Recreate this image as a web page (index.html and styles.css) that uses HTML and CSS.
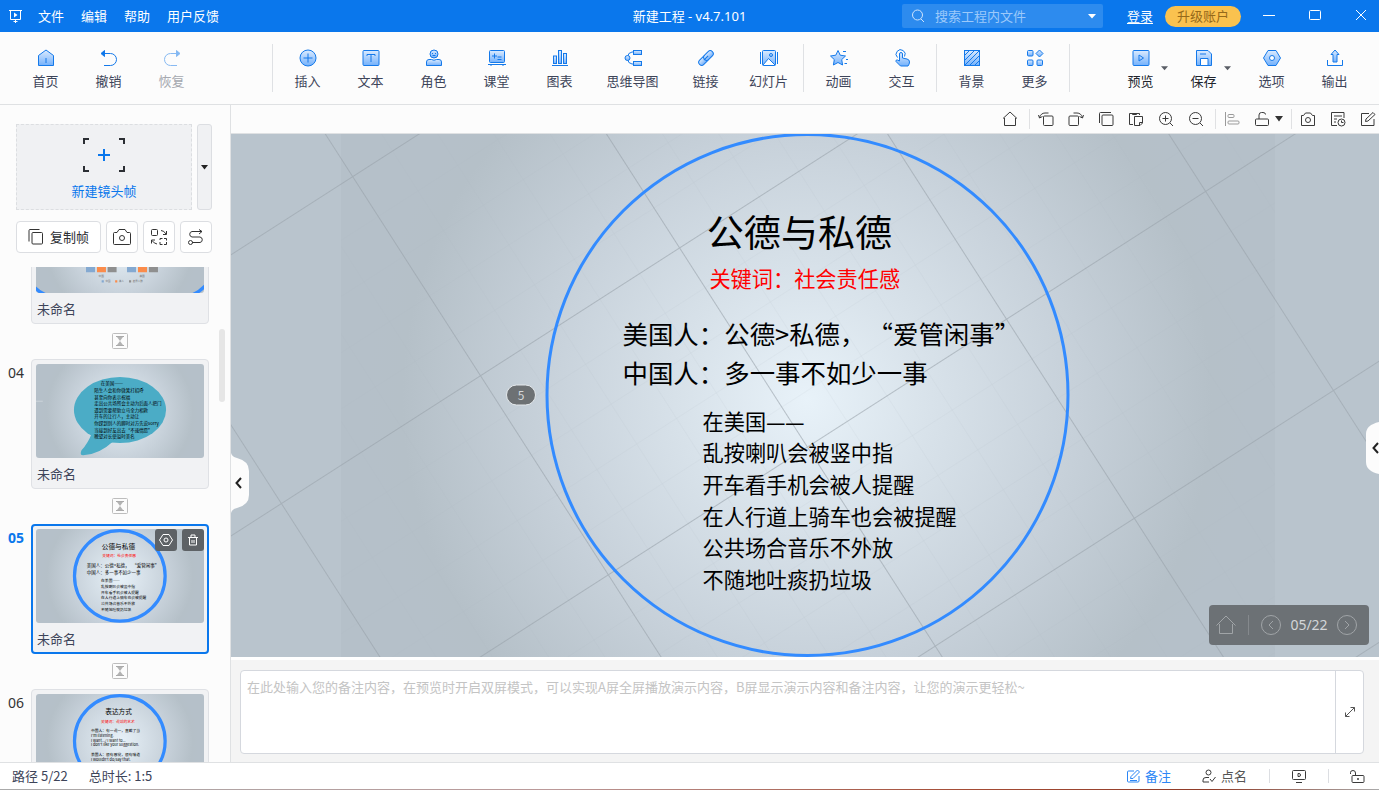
FILE: index.html
```html
<!DOCTYPE html>
<html lang="zh-CN">
<head>
<meta charset="utf-8">
<meta name="viewport" content="width=device-width, initial-scale=1">
<title>新建工程 - v4.7.101</title>
<link rel="stylesheet" href="styles.css">
</head>
<body>
<svg class="defs" width="0" height="0" aria-hidden="true">
  <defs>
    <linearGradient id="ig" x1="0" y1="0" x2="0" y2="1"><stop offset="0" stop-color="#dcebfe"/><stop offset="1" stop-color="#74b1fb"/></linearGradient>
    <radialGradient id="glow" gradientUnits="userSpaceOnUse" cx="807" cy="400" r="440">
      <stop offset="0" stop-color="#e8f2f9"/><stop offset=".3" stop-color="#d7e1e9"/><stop offset=".6" stop-color="#c7d1da"/><stop offset=".92" stop-color="#b5c0c8"/><stop offset="1" stop-color="#b5c0c9"/>
    </radialGradient>
    <pattern id="minor" width="47.3" height="47.3" patternUnits="userSpaceOnUse" patternTransform="translate(352 177) rotate(-32.7)"><path d="M0 0H47.3M0 0V47.3" stroke="#a3b0ba" stroke-opacity=".2" fill="none"/></pattern>
    <pattern id="major" width="236.6" height="236.6" patternUnits="userSpaceOnUse" patternTransform="translate(352 177) rotate(-32.7)"><path d="M0 0H236.6M0 0V236.6" stroke="#97a0a8" stroke-opacity=".75" stroke-width="2" fill="none"/></pattern>
  </defs>
</svg>
<div class="app">
  <header class="titlebar">
    <svg class="logo" width="15" height="15" viewBox="0 0 15 15"><path d="M1 1.500H14M2.500 1.500V10.500H12.500V1.500M7.500 10.500V14M5.500 12.500H9.500" fill="none" stroke="#fff"/><path d="M6 3.500L9.500 6L6 8.500Z" fill="#fff"/></svg>
    <nav class="menu"><button>文件</button><button>编辑</button><button>帮助</button><button>用户反馈</button></nav>
    <h1 class="doc-title">新建工程 - v4.7.101</h1>
    <div class="search">
      <svg width="14" height="14" viewBox="0 0 14 14" fill="none" stroke="#cfe4fd"><circle cx="6.500" cy="6" r="5"/><path d="M10 10L13 13"/></svg>
      <input type="text" placeholder="搜索工程内文件" aria-label="搜索工程内文件">
      <button aria-label="搜索范围"><svg width="10" height="6" viewBox="0 0 10 6"><path d="M1 1H9L5 5.500Z" fill="#fff"/></svg></button>
    </div>
    <a class="login" href="#">登录</a>
    <button class="upgrade">升级账户</button>
    <div class="winbtns">
      <button aria-label="最小化"><svg width="12" height="12" viewBox="0 0 12 12"><path d="M0 5.500H12" stroke="#fff"/></svg></button>
      <button aria-label="最大化"><svg width="12" height="12" viewBox="0 0 12 12"><rect x=".5" y=".5" width="11" height="9" rx="1" fill="none" stroke="#fff"/></svg></button>
      <button aria-label="关闭"><svg width="12" height="12" viewBox="0 0 12 12"><path d="M1 0L11 10M11 0L1 10" stroke="#fff"/></svg></button>
    </div>
  </header>

  <div class="ribbon">
    <div class="group">
      <button class="tool"><svg class="ic" viewBox="0 0 18 18"><path d="M1.500 6.500L9 1L16.500 6.500V16.500H1.500Z"/><path d="M9 9V14"/></svg><span>首页</span></button>
      <button class="tool"><svg class="ic line" viewBox="0 0 18 18"><path d="M3 4.500H10.500A6 6 0 0 1 10.500 16.500H4"/><path class="solid" d="M4.500 1.500L1 4.500L4.500 7.500Z"/></svg><span>撤销</span></button>
      <button class="tool" disabled><svg class="ic line" viewBox="0 0 18 18"><path d="M15 4.500H7.500A6 6 0 0 0 7.500 16.500H14"/><path class="solid" d="M13.500 1.500L17 4.500L13.500 7.500Z"/></svg><span>恢复</span></button>
    </div>
    <div class="group insert">
      <i class="sep"></i>
      <button class="tool"><svg class="ic" viewBox="0 0 18 18"><circle cx="9" cy="9" r="8"/><path d="M9 4.500V13.500M4.500 9H13.500"/></svg><span>插入</span></button>
      <button class="tool"><svg class="ic" viewBox="0 0 18 18"><rect x="1" y="1.500" width="16" height="15" rx="1"/><path d="M5 7V5.500H13V7M9 5.500V13"/></svg><span>文本</span></button>
      <button class="tool"><svg class="ic" viewBox="0 0 18 18"><circle cx="9" cy="5" r="4"/><path d="M1.500 16.500V13Q1.500 10.500 4 10.500H6.500Q9 12 11.500 10.500H14Q16.500 10.500 16.500 13V16.500Z"/><path d="M7.500 4V5M10.500 4V5M7.500 6.500H10.500"/></svg><span>角色</span></button>
      <button class="tool"><svg class="ic" viewBox="0 0 18 18"><rect x="1.500" y="1.500" width="15" height="12" rx="1"/><path d="M0 15.500H18M3 15.500V17M15 15.500V17M4 7H9M6.500 4.500V9.500M9.500 8H13.500M9.500 10.500H13.500"/></svg><span>课堂</span></button>
      <button class="tool"><svg class="ic" viewBox="0 0 18 18"><path d="M1 16.500H17"/><rect x="2.500" y="7" width="3" height="7.500"/><rect x="7.500" y="1.500" width="3" height="13"/><rect x="12.500" y="4.500" width="3" height="10"/></svg><span>图表</span></button>
      <button class="tool wide"><svg class="ic" viewBox="0 0 18 18"><path fill="none" d="M9 3H8Q4 3.500 3.500 8M9 15H8Q4 14.500 3.500 10"/><circle cx="3.500" cy="9" r="2.500"/><rect x="9.500" y="1.500" width="8" height="4"/><rect x="9.500" y="12.500" width="8" height="4"/></svg><span>思维导图</span></button>
      <button class="tool"><svg class="ic" viewBox="0 0 18 18"><g transform="rotate(-45 9 9)"><rect x="0" y="6" width="11" height="6" rx="3"/><rect x="7" y="6" width="11" height="6" rx="3"/><path d="M6 9H12"/></g></svg><span>链接</span></button>
      <button class="tool"><svg class="ic" viewBox="0 0 18 18"><path d="M.5 3V15M17.500 3V15"/><rect x="2.500" y="1.500" width="13" height="15" rx="1"/><path d="M3 16L8.500 9.500L15 16" fill="#fff"/><circle cx="11" cy="6" r="1.500"/></svg><span>幻灯片</span></button>
      <i class="sep"></i>
      <button class="tool"><svg class="ic" viewBox="0 0 18 18"><path d="M8 1.500L10.200 6.200L15.500 7L11.700 10.600L12.600 16L8 13.500L3.400 16L4.300 10.600L.5 7L5.800 6.200Z"/><path d="M13 2.500H16M16 10.500H18M14.500 14.500H17"/></svg><span>动画</span></button>
      <button class="tool"><svg class="ic" viewBox="0 0 18 18"><path fill="none" d="M4.500 8.500A4.500 4.500 0 1 1 11.500 7.500"/><path d="M6.500 12V5A1.500 1.500 0 0 1 9.500 5V9L14 10Q16.500 10.500 16.500 13Q16.500 15 15 17H7.500L3 12.500Q2.500 10.500 4.500 11Z"/></svg><span>交互</span></button>
      <i class="sep"></i>
      <button class="tool"><svg class="ic" viewBox="0 0 18 18"><rect x="1.500" y="1.500" width="15" height="15"/><path d="M2 6L6 2M2 11L11 2M2 16L16 2M7 16L16 7M12 16L16 12"/></svg><span>背景</span></button>
      <button class="tool"><svg class="ic" viewBox="0 0 18 18"><rect x="1.500" y="1.500" width="5.500" height="5.500" rx="1"/><path d="M13.500 1L17 4.500L13.500 8L10 4.500Z"/><rect x="1.500" y="11" width="5.500" height="5.500" rx="1"/><rect x="11" y="11" width="5.500" height="5.500" rx="1"/></svg><span>更多</span></button>
      <i class="sep"></i>
    </div>
    <div class="group right">
      <button class="tool dark"><svg class="ic" viewBox="0 0 18 18"><rect x="1" y="1.500" width="16" height="15" rx="1"/><path d="M7 6L11.500 9L7 12Z"/></svg><span>预览</span><svg class="caret" viewBox="0 0 8 5"><path d="M0 0H8L4 4.500Z"/></svg></button>
      <button class="tool dark"><svg class="ic" viewBox="0 0 18 18"><path d="M1.500 1.500H13L16.500 5V16.500H1.500Z"/><path d="M5.500 16.500V9.500H13V16.500Z" fill="#fff"/><path d="M5 5H11"/></svg><span>保存</span><svg class="caret" viewBox="0 0 8 5"><path d="M0 0H8L4 4.500Z"/></svg></button>
      <button class="tool opt"><svg class="ic" viewBox="0 0 18 18"><path d="M5 1.500H13L17.500 9L13 16.500H5L.5 9Z"/><circle cx="9" cy="9" r="2.500" fill="#fff"/></svg><span>选项</span></button>
      <button class="tool"><svg class="ic" viewBox="0 0 18 18"><path d="M1.500 11V16.500H16.500V11" fill="none"/><path d="M9 1L13 5.500H11V13H7V5.500H5Z"/></svg><span>输出</span></button>
    </div>
  </div>

  <div class="workspace">
    <aside class="sidebar">
      <div class="newrow">
        <button class="newframe">
          <svg width="42" height="34" viewBox="0 0 42 34" fill="none" stroke-width="2"><path stroke="#2b2e33" d="M1 6V1H6M36 1H41V6M1 28V33H6M36 33H41V28" /><path stroke="#0a77ec" d="M21 11V23M15 17H27"/></svg>
          <span>新建镜头帧</span>
        </button>
        <button class="newmore" aria-label="镜头帧类型"><svg width="7" height="5" viewBox="0 0 7 5"><path d="M0 0H7L3.500 4.500Z" fill="#222"/></svg></button>
      </div>
      <div class="frametools">
        <button class="copy"><svg width="16" height="16" viewBox="0 0 16 16"><rect x="4" y="3.500" width="10.500" height="11.500" rx="1"/><path d="M1 12.500V1.500Q1 .5 2 .5H11.500"/></svg><span>复制帧</span></button>
        <button aria-label="截图"><svg width="18" height="16" viewBox="0 0 18 16"><path d="M1.500 3.500H4L6 .5H12L14 3.500H16.500Q17.500 3.500 17.500 4.500V14.500Q17.500 15.500 16.500 15.500H1.500Q.5 15.500 .5 14.500V4.500Q.5 3.500 1.500 3.500Z"/><circle cx="9" cy="9" r="2.500"/></svg></button>
        <button aria-label="替换"><svg width="18" height="16" viewBox="0 0 18 16"><rect x="1.500" y=".5" width="6" height="6" rx="1"/><path d="M10 9.500V11M10 13V15.500H12.500M14 15.500H16.500V13M16.500 11.500V9.500H14M12.500 9.500H10M11 1.500Q14 1.500 16 5M16.500 2V5.500H13M7 15Q4 14.500 2 11.500M1.500 14.500V11H5"/></svg></button>
        <button aria-label="路径"><svg width="18" height="16" viewBox="0 0 18 16"><path d="M15 2.500H5A2.800 2.800 0 0 0 5 8H13A2.800 2.800 0 0 1 13 13.500H5M12 .5L15 2.500L12 5"/><circle cx="3.500" cy="13.500" r="2"/></svg></button>
      </div>
      <div class="framelist">
        <div class="frames">
          <div class="frame"><b></b><div class="card">
            <svg class="thumb" viewBox="341 134 934 523" preserveAspectRatio="none"><rect x="341" y="134" width="934" height="523" fill="url(#glow)"/>
              <svg x="341" y="134" width="934" height="523" viewBox="0 0 934 523"><path d="M-10 490Q20 522 60 535M944 480Q904 522 864 535" stroke="#338bff" stroke-width="18" fill="none"/><path d="M278 330h50v78h-50zM506 330h50v78h-50z" fill="#84a9d1"/><path d="M339 330h50v78h-50zM567 330h50v78h-50z" fill="#fb8c4b"/><path d="M398 330h50v78h-50zM628 330h50v78h-50z" fill="#8f8f8f"/><g fill="#777"><text x="348" y="433" font-size="15">中国</text><text x="575" y="433" font-size="15">美国</text><text x="386" y="464" font-size="14">中国</text><text x="462" y="464" font-size="14">美人</text><text x="538" y="464" font-size="14">差异人群</text></g>
              <path d="M365 452h12v12h-12z" fill="#84a9d1"/><path d="M440 452h12v12h-12z" fill="#fb8c4b"/><path d="M517 452h12v12h-12z" fill="#8f8f8f"/></svg></svg>
            <span>未命名</span></div></div>
          <i class="trans"><svg width="16" height="16" viewBox="0 0 16 16"><rect x=".5" y=".5" width="15" height="15" rx="1" fill="none" stroke="#bdbdbd"/><path d="M4 3.500H12M4 12.500H12" stroke="#aaa"/><path d="M5 4H11L8 8ZM8 8L11 12H5Z" fill="#b3b3b3"/></svg></i>
          <div class="frame"><b>04</b><div class="card">
            <svg class="thumb" viewBox="341 134 934 523" preserveAspectRatio="none"><rect x="341" y="134" width="934" height="523" fill="url(#glow)"/>
              <svg x="341" y="134" width="934" height="523" viewBox="0 0 934 523"><path d="M0 207H38" stroke="#d5dce2" stroke-width="4"/><path d="M310 385Q290 440 253 480Q240 507 262 508Q350 505 430 430Z" fill="#4bacc6"/><ellipse cx="467" cy="256" rx="256" ry="183" fill="#4bacc6"/>
              <g font-size="25"><text x="360" y="118">在美国——</text><text x="324" y="155">陌生人会和你微笑打招呼</text><text x="324" y="192">甚至向你表示祝福</text><text x="324" y="229">走出公共场所会主动为后面人把门</text><text x="324" y="266">遇到需要帮助立马全力相救</text><text x="324" y="303">开车的让行人，主动让</text><text x="324" y="340">你踩到别人的脚时对方先说sorry</text><text x="324" y="377">当接到好友出去“不速情愿”</text><text x="324" y="414">晚望对长使溢时美名</text></g></svg></svg>
            <span>未命名</span></div></div>
          <i class="trans"><svg width="16" height="16" viewBox="0 0 16 16"><rect x=".5" y=".5" width="15" height="15" rx="1" fill="none" stroke="#bdbdbd"/><path d="M4 3.500H12M4 12.500H12" stroke="#aaa"/><path d="M5 4H11L8 8ZM8 8L11 12H5Z" fill="#b3b3b3"/></svg></i>
          <div class="frame active"><b>05</b><div class="card">
            <svg class="thumb" viewBox="341 134 934 523" preserveAspectRatio="none"><rect x="341" y="134" width="934" height="523" fill="url(#glow)"/><circle cx="807" cy="395" r="252" fill="none" stroke="#338bff" stroke-width="18"/>
              <svg x="341" y="134" width="934" height="523" viewBox="0 0 934 523"><text x="366" y="113" font-size="37">公德与私德</text><text x="368" y="154" font-size="21" fill="#f00">关键词：社会责任感</text><g font-size="25"><text x="282" y="210">美国人：公德&gt;私德，<tspan dx="15">“爱管闲事”</tspan></text><text x="282" y="248">中国人：多一事不如少一事</text></g><g font-size="21"><text x="362" y="296">在美国——</text><text x="362" y="328">乱按喇叭会被竖中指</text><text x="362" y="359">开车看手机会被人提醒</text><text x="362" y="391">在人行道上骑车也会被提醒</text><text x="362" y="422">公共场合音乐不外放</text><text x="362" y="454">不随地吐痰扔垃圾</text></g></svg></svg>
            <div class="actions"><button aria-label="设置"><svg width="14" height="12" viewBox="0 0 14 12" fill="none" stroke="#fff"><path d="M4 .5H10L13.500 6L10 11.500H4L.5 6Z"/><circle cx="7" cy="6" r="2"/></svg></button><button aria-label="删除"><svg width="12" height="12" viewBox="0 0 12 12" fill="none" stroke="#fff"><path d="M1 3.500H11M4 3V1H8V3M2.500 3.500V11H9.500V3.500M5 6V9M7 6V9"/></svg></button></div>
            <span>未命名</span></div></div>
          <i class="trans"><svg width="16" height="16" viewBox="0 0 16 16"><rect x=".5" y=".5" width="15" height="15" rx="1" fill="none" stroke="#bdbdbd"/><path d="M4 3.500H12M4 12.500H12" stroke="#aaa"/><path d="M5 4H11L8 8ZM8 8L11 12H5Z" fill="#b3b3b3"/></svg></i>
          <div class="frame"><b>06</b><div class="card">
            <svg class="thumb" viewBox="341 134 934 523" preserveAspectRatio="none"><rect x="341" y="134" width="934" height="523" fill="url(#glow)"/><circle cx="807" cy="395" r="252" fill="none" stroke="#338bff" stroke-width="18"/>
              <svg x="341" y="134" width="934" height="523" viewBox="0 0 934 523"><text x="385" y="114" font-size="37">表达方式</text><text x="361" y="163" font-size="21" fill="#f00">关键词：说话的艺术</text><g font-size="21"><text x="306" y="213">中国人：有一说一，直截了当</text><text x="306" y="241">I'm listening.</text><text x="306" y="268">I want.../ I want to...</text><text x="306" y="292">I don't like your suggestion.</text><text x="306" y="347">美国人：很有感觉，很有味道</text><text x="306" y="374">I wouldn't do/say that.</text></g></svg></svg>
            </div></div>
        </div>
        <div class="scrollthumb"></div>
      </div>
    </aside>

    <main class="main">
      <div class="viewbar">
        <button aria-label="主页"><svg viewBox="0 0 16 16"><path d="M1 7.500L8 1L15 7.500M2.500 7V14.500H13.500V7"/></svg></button>
        <i class="sep"></i>
        <button aria-label="左旋转"><svg viewBox="0 0 16 16"><rect x="5.500" y="5" width="9.500" height="9.500" rx="1"/><path d="M10.500 2H7Q3 2 1.500 6.500M.5 4L1.500 7L4.500 5.500"/></svg></button>
        <button aria-label="右旋转"><svg viewBox="0 0 16 16"><rect x="1" y="5" width="9.500" height="9.500" rx="1"/><path d="M5.500 2H9Q13 2 14.500 6.500M15.500 4L14.500 7L11.500 5.500"/></svg></button>
        <button aria-label="复制"><svg viewBox="0 0 16 16"><rect x="4" y="4" width="11" height="10.500" rx="1"/><path d="M1.500 12V2.500Q1.500 1.500 2.500 1.500H13"/></svg></button>
        <button aria-label="粘贴"><svg viewBox="0 0 16 16"><path d="M5 13.500H1.500V2.500H11.500V4M4.500 2V3.500H8.500V2M6.500 5.500H14.500V12L12 14.500H6.500ZM14.500 11.500H11.500V14.500"/></svg></button>
        <button aria-label="放大"><svg viewBox="0 0 16 16"><circle cx="7.500" cy="7.500" r="6"/><path d="M12 12L15 15M4.500 7.500H10.500M7.500 4.500V10.500"/></svg></button>
        <button aria-label="缩小"><svg viewBox="0 0 16 16"><circle cx="7.500" cy="7.500" r="6"/><path d="M12 12L15 15M4.500 7.500H10.500"/></svg></button>
        <i class="sep"></i>
        <button aria-label="对齐" disabled><svg viewBox="0 0 16 16"><path d="M1.500 1V15"/><rect x="4" y="3.500" width="6" height="3" rx="1"/><rect x="4" y="10" width="11" height="3" rx="1"/></svg></button>
        <button aria-label="解锁" class="lock"><svg viewBox="0 0 16 16"><rect x="1.500" y="8" width="13" height="6.500" rx="1"/><path d="M5 8V4Q5 1.500 7.500 1.500H9Q11.500 1.500 11.500 3.500"/></svg></button>
        <button aria-label="锁定选项" class="drop"><svg viewBox="0 0 8 6"><path d="M0 0H8L4 5.500Z" fill="#333" stroke="none"/></svg></button>
        <i class="sep"></i>
        <button aria-label="截图"><svg viewBox="0 0 16 16"><path d="M1.500 4.500H3.500L5.500 2H10.500L12.500 4.500H14.500V14.500H1.500Z"/><circle cx="8" cy="9" r="2.500"/></svg></button>
        <button aria-label="历史"><svg viewBox="0 0 16 16"><path d="M7 14.500H1.500V1.500H14V7M4 5H12M4 8H7M4 11H6"/><circle cx="11.500" cy="11.500" r="3.500"/><path d="M11.500 9.500V11.500H13.500"/></svg></button>
        <button aria-label="编辑" class="last"><svg viewBox="0 0 16 16"><path d="M9 2.500H1.500V14.500H14V8M5.500 10.500L6 8L13 1.500L15 3.500L8 10Z"/></svg></button>
      </div>

      <div class="stage">
        <svg class="board" viewBox="231 134 1148 524" preserveAspectRatio="xMidYMid slice">
          <rect x="-800" y="-400" width="3200" height="1600" fill="#b9c4cd"/>
          <rect x="341" y="134" width="934" height="524" fill="url(#glow)"/>
          <rect x="341" y="134" width="934" height="524" fill="url(#minor)"/>
          <rect x="-800" y="-400" width="3200" height="1600" fill="url(#major)" opacity=".75"/>
          <circle cx="807.500" cy="395.500" r="260.500" fill="none" stroke="#338bff" stroke-width="3"/>
          <rect x="506.500" y="385.500" width="29" height="20" rx="10" fill="#6d7174" stroke="#e4e8eb"/>
          <text class="badge" x="521" y="400" text-anchor="middle" font-size="12">5</text>
          <svg x="231" y="134" width="1148" height="524" viewBox="0 0 2166 989" preserveAspectRatio="xMinYMin meet">
            <text x="898" y="214" font-size="70">公德与私德</text>
            <text x="903" y="290" font-size="40" fill="#f00">关键词：社会责任感</text>
            <g font-size="48"><text x="739" y="398">美国人：公德&gt;私德，<tspan dx="28">“爱管闲事”</tspan></text><text x="739" y="470">中国人：多一事不如少一事</text></g>
            <g font-size="40"><text x="890" y="559">在美国<tspan class="dash" font-size="36">——</tspan></text><text x="890" y="619">乱按喇叭会被竖中指</text><text x="890" y="678">开车看手机会被人提醒</text><text x="890" y="738">在人行道上骑车也会被提醒</text><text x="890" y="797">公共场合音乐不外放</text><text x="890" y="857">不随地吐痰扔垃圾</text></g>
          </svg>
        </svg>
        <button class="handle left" aria-label="收起左侧栏"><svg width="18" height="60" viewBox="0 0 18 60"><path d="M0 0Q1 4 6 5Q18 8 18 18V42Q18 52 6 55Q1 56 0 60Z" fill="#fcfcfc"/><path d="M10 25L5.500 30L10 35" fill="none" stroke="#222" stroke-width="2"/></svg></button>
        <button class="handle right" aria-label="展开右侧栏"><svg width="13" height="52" viewBox="0 0 13 52"><path d="M13 0Q0 3 0 12V40Q0 49 13 52Z" fill="#fcfcfc"/><path d="M12 21L7.500 26L12 31" fill="none" stroke="#222" stroke-width="2"/></svg></button>
        <div class="pager">
          <button aria-label="首帧"><svg width="20" height="20" viewBox="0 0 20 20"><path d="M.5 10.500L10 1L19.500 10.500M3.500 9V18.500H16.500V9"/></svg></button>
          <i></i>
          <button aria-label="上一帧"><svg width="20" height="20" viewBox="0 0 20 20"><circle cx="10" cy="10" r="9.500"/><path d="M12 6L8 10L12 14"/></svg></button>
          <span>05/22</span>
          <button aria-label="下一帧"><svg width="20" height="20" viewBox="0 0 20 20"><circle cx="10" cy="10" r="9.500"/><path d="M8 6L12 10L8 14"/></svg></button>
        </div>
      </div>

      <div class="notes">
        <div class="notebox">
          <textarea aria-label="备注" placeholder="在此处输入您的备注内容，在预览时开启双屏模式，可以实现A屏全屏播放演示内容，B屏显示演示内容和备注内容，让您的演示更轻松~"></textarea>
          <button aria-label="展开备注"><svg width="12" height="12" viewBox="0 0 12 12" fill="none" stroke="#555"><path d="M1.500 10.500L10.500 1.500M6.500 1.500H10.500V5.500M1.500 6.500V10.500H5.500"/></svg></button>
        </div>
      </div>
    </main>
  </div>

  <footer class="status">
    <span>路径 5/22</span><span>总时长: 1:5</span>
    <div class="statusright">
      <button class="note on"><svg width="13" height="14" viewBox="0 0 13 14"><path d="M7 2H1.500Q.5 2 .5 3V12Q.5 13 1.500 13H11Q12 13 12 12V7M3.500 9.500L4 7.500L10.500 1L12.500 3L6 9.500ZM3 11.500H10"/></svg>备注</button>
      <button class="note roll"><svg width="14" height="14" viewBox="0 0 14 14"><circle cx="6.500" cy="3.500" r="2.500"/><path d="M7 13H1V11Q1 8.500 4 8.500H7M8 10L10 12.500L13.500 8"/></svg>点名</button>
      <i class="sep"></i>
      <button aria-label="双屏"><svg width="14" height="14" viewBox="0 0 14 14"><rect x=".5" y="1.500" width="13" height="9" rx="1"/><path d="M4 13.500H10M6 4.500V7.500H7Q8.500 7.500 8.500 6T7 4.500Z"/></svg></button>
      <i class="sep"></i>
      <button aria-label="锁定"><svg width="16" height="14" viewBox="0 0 16 14"><rect x="3" y="6.500" width="12" height="7" rx="1"/><path d="M6.500 6V4Q6.500 1.500 4 1.500Q1.500 1.500 1.500 3.500V5M8.500 9.500H9.500V10.500H8.500Z"/></svg></button>
    </div>
  </footer>
  <div class="underlay"></div>
</div>
</body>
</html>
```

FILE: styles.css
```css
* { box-sizing: border-box; }

body {
  margin: 0;
  font: 13px/18px "Noto Sans", "Noto Sans CJK SC", sans-serif;
  color: #3d4459;
  background: #fcfcfc;
}

button {
  margin: 0;
  padding: 0;
  border: 0;
  background: none;
  font: inherit;
  color: inherit;
}

svg { display: block; flex: none; }
.defs { position: absolute; }

.app {
  display: grid;
  grid-template-rows: auto auto minmax(0, 1fr) auto auto;
  height: 100vh;
  overflow: hidden;
}

/* Title bar */
.titlebar {
  position: relative;
  display: flex;
  align-items: center;
  height: 32px;
  padding-left: 8px;
  background: #0a77ec;
  color: #fff;
}
.menu { display: flex; gap: 17px; margin-left: 15px; }
.doc-title {
  position: absolute;
  left: 50%;
  transform: translateX(-50%);
  margin: 0;
  font-size: 13px;
  font-weight: 400;
}
.search {
  display: flex;
  align-items: center;
  width: 201px;
  height: 24px;
  margin-left: auto;
  padding: 0 6px 0 9px;
  border-radius: 2px;
  background: #2d8bee;
}
.search input {
  flex: 1;
  min-width: 0;
  margin-left: 10px;
  padding: 0;
  border: 0;
  outline: 0;
  background: none;
  font: inherit;
  color: #fff;
}
.search input::placeholder { color: #9cc9fa; opacity: 1; }
.login { margin-left: 24px; color: #fff; text-underline-offset: 2px; }
.upgrade {
  width: 76px;
  height: 21px;
  margin-left: 12px;
  border-radius: 11px;
  background: #fac24f;
  color: #95691a;
  line-height: 20px;
}
.winbtns { display: flex; gap: 34px; margin: 0 12px 0 22px; }

/* Ribbon */
.ribbon {
  display: flex;
  height: 73px;
  padding: 0 13px 0 14px;
  border-bottom: 1px solid #dfe1e3;
}
.group { display: flex; }
.insert { margin-left: 66px; }
.right { margin-left: auto; }
.group .sep {
  width: 1px;
  height: 48px;
  margin: 12px 3px 0;
  background: #dfe1e4;
}
.tool {
  position: relative;
  display: flex;
  flex-direction: column;
  align-items: center;
  width: 63px;
  padding-top: 17px;
}
.tool span { margin-top: 5px; }
.wide { width: 83px; }
.dark { color: #20242c; }
.opt { margin-left: 5px; }
.tool:disabled { color: #a5a8af; }
.tool:disabled .ic { opacity: .5; }
.ic { width: 18px; height: 18px; fill: url(#ig); stroke: #1479ea; }
.line { fill: none; }
.solid { fill: #0a77ec; }
.caret {
  position: absolute;
  left: 52px;
  top: 34px;
  width: 7px;
  height: 5px;
  fill: #5a5e66;
}

/* Workspace */
.workspace { display: grid; grid-template-columns: 231px minmax(0, 1fr); min-height: 0; }

.sidebar {
  display: flex;
  flex-direction: column;
  min-height: 0;
  padding-top: 19px;
  border-right: 1px solid #dfe1e3;
}
.newrow { display: flex; gap: 5px; padding: 0 18px 0 16px; }
.newframe {
  display: flex;
  flex: 1;
  flex-direction: column;
  align-items: center;
  height: 86px;
  padding-top: 13px;
  border: 1px dashed #dcdee1;
  background: #f0f1f3;
  color: #0a77ec;
}
.newframe span { margin-top: 10px; }
.newmore {
  display: grid;
  place-items: center;
  width: 15px;
  border: 1px solid #dcdee2;
  border-radius: 3px;
  background: #f0f1f3;
}
.frametools { display: flex; gap: 5px; padding: 11px 18px 0 16px; }
.frametools button {
  display: flex;
  align-items: center;
  justify-content: center;
  width: 32px;
  height: 32px;
  border: 1px solid #dcdee2;
  border-radius: 4px;
  background: #fff;
  color: #2b2e33;
}
.frametools .copy { flex: 1; gap: 6px; }
.frametools svg { fill: none; stroke: #333; }

.framelist { position: relative; flex: 1; min-height: 0; margin-top: 14px; overflow: hidden; }
.frames { display: flex; flex-direction: column; margin-top: -73px; padding-left: 8px; }
.frame { display: flex; }
.frame b {
  width: 23px;
  padding-top: 5px;
  font-size: 14px;
  font-weight: 400;
  color: #333;
}
.card {
  position: relative;
  width: 178px;
  height: 130px;
  padding: 4px;
  border: 1px solid #dfe1e5;
  border-radius: 4px;
  background: #f1f2f4;
}
.card > span { display: block; margin: 7px 1px; }
.thumb { width: 168px; height: 94px; border-radius: 3px; }
.active b { font-weight: 700; color: #0a77ec; }
.active .card { padding: 3px; border: 2px solid #0a77ec; }
.actions { position: absolute; top: 3px; right: 3px; display: flex; gap: 5px; }
.actions button {
  display: grid;
  place-items: center;
  width: 22px;
  height: 22px;
  border-radius: 3px;
  background: #5e6266;
}
.trans { display: flex; justify-content: center; width: 178px; height: 35px; margin-left: 23px; padding-top: 9px; }
.scrollthumb {
  position: absolute;
  top: 62px;
  right: 5px;
  width: 6px;
  height: 73px;
  border-radius: 3px;
  background: #e6e6e6;
}

.main { display: flex; flex-direction: column; min-width: 0; min-height: 0; }
.viewbar {
  display: flex;
  align-items: center;
  justify-content: flex-end;
  height: 29px;
  border-bottom: 1px solid #dfe1e3;
}
.viewbar button { display: grid; place-items: center; width: 22px; margin: 0 8px 0 0; }
.viewbar svg { width: 16px; height: 16px; fill: none; stroke: #3a3a3a; }
.viewbar button:disabled { opacity: .5; }
.viewbar .sep { width: 1px; height: 20px; margin: 0 5px 0 0; background: #e0e1e3; }
.viewbar .lock { margin-right: 1px; }
.viewbar .drop { width: 10px; margin-right: 7px; }
.viewbar .drop svg { width: 8px; height: 6px; }
.viewbar .last { margin-right: 0; }

.stage { position: relative; flex: 1; min-height: 0; overflow: hidden; background: #b9c4cd; }
.board { width: 100%; height: 100%; }
.board text, .thumb text { font-family: "Noto Sans CJK SC", sans-serif; }
.board .dash { font-family: "Noto Sans", sans-serif; }
.board .badge { fill: #d5d8da; }
.handle { position: absolute; }
.handle.left { left: 0; top: 319px; }
.handle.right { right: 0; top: 288px; }
.pager {
  position: absolute;
  right: 10px;
  bottom: 12px;
  display: flex;
  align-items: center;
  width: 160px;
  height: 40px;
  padding: 0 12px 0 7px;
  border-radius: 4px;
  background: #6c7175;
  color: #d4d6d8;
  font-size: 14px;
}
.pager svg { fill: none; stroke: #a0a4a7; }
.pager i { width: 1px; height: 20px; margin: 0 12px; background: #85898d; }
.pager span { flex: 1; text-align: center; }

.notes {
  height: 105px;
  padding: 9px 15px 8px 9px;
  border-top: 3px solid #fff;
  background: #f4f4f4;
}
.notebox {
  display: flex;
  height: 84px;
  margin-top: 1px;
  border: 1px solid #d5d8de;
  border-radius: 4px;
  background: #fff;
}
.notebox textarea {
  flex: 1;
  min-width: 0;
  padding: 7px 6px;
  border: 0;
  outline: 0;
  resize: none;
  background: none;
  font: 13px/18px "Noto Sans CJK SC", sans-serif;
}
.notebox textarea::placeholder { color: #c4c4c4; opacity: 1; }
.notebox button { display: grid; place-items: center; width: 28px; border-left: 1px solid #d5d8de; }

/* Status bar */
.status {
  display: flex;
  align-items: center;
  gap: 21px;
  height: 27px;
  padding: 0 14px 0 12px;
  border-top: 1px solid #dfe1e3;
  background: #fff;
  font-family: "Noto Sans CJK SC", sans-serif;
}
.statusright { display: flex; align-items: center; margin-left: auto; }
.statusright svg { fill: none; stroke: #3a3a3a; }
.note { display: flex; align-items: center; gap: 5px; color: #555; }
.on { color: #2b86f5; }
.on svg { stroke: #2b86f5; }
.roll { margin-left: 31px; }
.statusright .sep { width: 1px; height: 14px; margin: 0 22px; background: #dcdee2; }
.statusright .sep:last-of-type { margin-right: 20px; }
.underlay { height: 1px; background: linear-gradient(90deg, #aaa, #b99 40%, #a54c35 70%, #8f3b28 88%, #aaa); }
```
